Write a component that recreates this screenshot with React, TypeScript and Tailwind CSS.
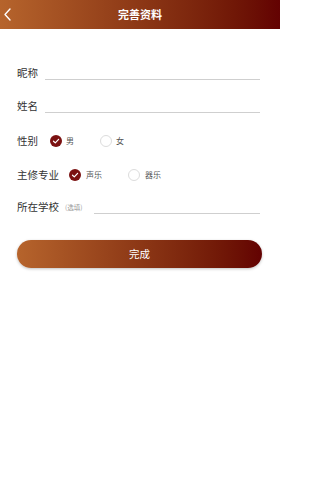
import React from "react";

const font = { fontFamily: '"Noto Sans CJK SC", "Noto Sans", sans-serif' };

function Radio({ checked }: { checked: boolean }) {
  if (checked) {
    return (
      <span className="w-[12px] h-[12px] rounded-full bg-[#7b1111] flex items-center justify-center">
        <svg width="8" height="8" viewBox="0 0 8 8" fill="none">
          <path d="M1.5 4.2 L3.3 5.9 L6.6 2.3" stroke="#fff" strokeWidth="1.2" strokeLinecap="round" strokeLinejoin="round" />
        </svg>
      </span>
    );
  }
  return <span className="w-[12px] h-[12px] rounded-full border border-[#dcdcdc] bg-white" />;
}

export default function App() {
  return (
    <div className="w-[280px] h-[500px] bg-white" style={font}>
      <div className="relative h-[29px] bg-gradient-to-r from-[#b6642c] to-[#630202] flex items-center justify-center">
        <svg className="absolute left-[3px] top-[8px]" width="9" height="13" viewBox="0 0 9 13" fill="none">
          <path d="M7 1 L2 6.5 L7 12" stroke="#fff" strokeWidth="1.4" strokeLinecap="round" strokeLinejoin="round" />
        </svg>
        <span className="text-white text-[11px] font-bold leading-none">完善资料</span>
      </div>

      <div className="pl-[17px] pr-[20px]">
        <div className="mt-[36px] flex items-end">
          <span className="w-[28px] text-[10.5px] leading-[14px] text-[#333]">昵称</span>
          <div className="flex-1 h-[15px] border-b border-[#cfcfcf]" />
        </div>
        <div className="mt-[18px] flex items-end">
          <span className="w-[28px] text-[10.5px] leading-[14px] text-[#333]">姓名</span>
          <div className="flex-1 h-[15px] border-b border-[#cfcfcf]" />
        </div>
        <div className="mt-[21px] h-[14px] flex items-center">
          <span className="w-[33px] text-[10.5px] leading-[14px] text-[#333]">性别</span>
          <Radio checked />
          <span className="ml-[4px] w-[34px] text-[8px] text-[#555]">男</span>
          <Radio checked={false} />
          <span className="ml-[4px] text-[8px] text-[#555]">女</span>
        </div>
        <div className="mt-[20px] h-[14px] flex items-center">
          <span className="w-[52px] text-[10.5px] leading-[14px] text-[#333]">主修专业</span>
          <Radio checked />
          <span className="ml-[5px] w-[42px] text-[8px] text-[#555]">声乐</span>
          <Radio checked={false} />
          <span className="ml-[5px] text-[8px] text-[#555]">器乐</span>
        </div>
        <div className="mt-[17px] flex items-end">
          <span className="text-[10.5px] leading-[14px] text-[#333]">所在学校</span>
          <span className="ml-[6px] w-[29px] text-[6.5px] leading-[14px] text-[#999]">(选填)</span>
          <div className="flex-1 h-[15px] border-b border-[#cfcfcf]" />
        </div>
      </div>

      <div className="mt-[26px] ml-[17px] w-[245px] h-[28px] rounded-full bg-gradient-to-r from-[#b6642c] to-[#630202] shadow-[0_1px_3px_rgba(0,0,0,0.25)] flex items-center justify-center">
        <span className="text-white text-[10.5px]">完成</span>
      </div>
    </div>
  );
}
